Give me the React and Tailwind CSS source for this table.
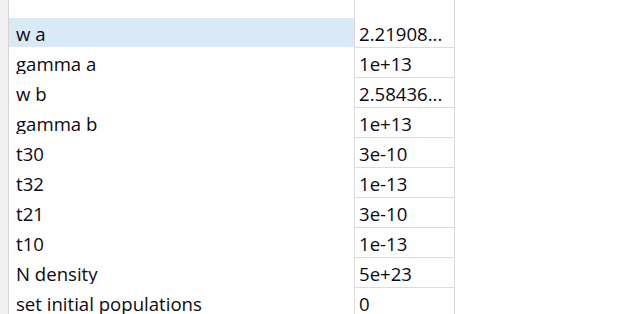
const ROWS = [
  { name: 'w a', value: '2.21908...', selected: true },
  { name: 'gamma a', value: '1e+13' },
  { name: 'w b', value: '2.58436...' },
  { name: 'gamma b', value: '1e+13' },
  { name: 't30', value: '3e-10' },
  { name: 't32', value: '1e-13' },
  { name: 't21', value: '3e-10' },
  { name: 't10', value: '1e-13' },
  { name: 'N density', value: '5e+23' },
  { name: 'set initial populations', value: '0' },
];

function Cell({ children }) {
  return (
    <div className="h-[26px] overflow-hidden pt-[4px] leading-[24px] whitespace-nowrap">
      {children}
    </div>
  );
}

export default function App() {
  return (
    <div
      className="flex w-[640px] h-[314px] overflow-hidden bg-white text-[18.6px] text-[#0a0a14]"
      style={{ fontFamily: '"Open Sans", "Noto Sans", sans-serif' }}
    >
      <div className="w-[9px] shrink-0 bg-[#f0f0f0] border-r border-[#d5d5d5]" />
      <div className="flex flex-col">
        <div className="flex h-[18px] shrink-0">
          <div className="w-[345px]" />
          <div className="w-[101px] border-x border-[#dcdcdc]" />
        </div>
        {ROWS.map((r) => (
          <div key={r.name} className="flex h-[30px] shrink-0">
            <div className={`w-[345px] pl-[7px] ${r.selected ? 'bg-[#d9e9f8] h-[29px]' : ''}`}>
              <Cell>{r.name}</Cell>
            </div>
            <div className="w-[101px] border-x border-b border-[#dcdcdc] pl-[4px]">
              <Cell>{r.value}</Cell>
            </div>
          </div>
        ))}
      </div>
    </div>
  );
}
